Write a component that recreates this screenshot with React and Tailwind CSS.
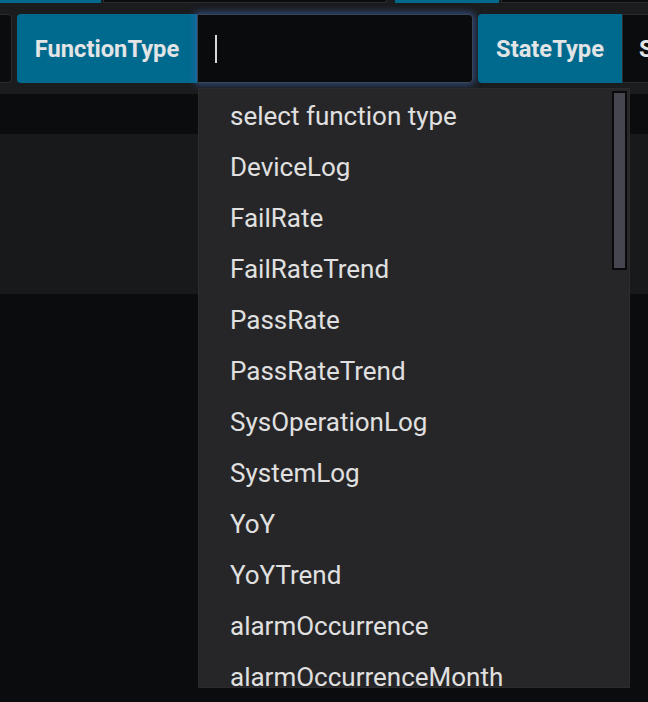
const OPTIONS = [
  'select function type',
  'DeviceLog',
  'FailRate',
  'FailRateTrend',
  'PassRate',
  'PassRateTrend',
  'SysOperationLog',
  'SystemLog',
  'YoY',
  'YoYTrend',
  'alarmOccurrence',
  'alarmOccurrenceMonth',
]

function Label({ children, className = '' }) {
  return (
    <div
      className={`shrink-0 flex items-center justify-center pt-[3px] bg-[#006a8e] text-[#e2e4e6] text-[23.7px] font-bold ${className}`}
    >
      {children}
    </div>
  )
}

export default function App() {
  return (
    <div className="relative w-full h-[702px] overflow-hidden bg-[#0b0c0e] font-['Roboto',sans-serif]">
      {/* toolbar */}
      <div className="bg-[#1b1c1e] h-[94px]">
        {/* previous row, mostly scrolled out */}
        <div className="flex h-[3px]">
          <div className="shrink-0 w-[101px] bg-[#006a8e]" />
          <div className="shrink-0 ml-[2px] w-[284px] bg-[#0b0c0e] border-x border-b border-[#2b2c2f] rounded-br-[4px]" />
          <div className="shrink-0 ml-[8px] w-[104px] bg-[#006a8e]" />
          <div className="ml-[2px] flex-1 min-w-0 bg-[#0b0c0e] border-l border-b border-[#2b2c2f]" />
        </div>

        <div className="flex mt-[11px] h-[69px]">
          <div className="shrink-0 w-[12px] bg-[#0b0c0e] border border-l-0 border-[#2b2c2f] rounded-r-[4px]" />
          <Label className="ml-[5px] w-[180px] rounded-l-[4px]">FunctionType</Label>
          <div className="shrink-0 w-[276px] bg-[#0a0b0d] border border-[#3b4558] rounded-r-[4px] shadow-[0_0_7px_2px_rgba(60,105,180,0.6)] flex items-center pl-[17px]">
            <div className="w-[2px] h-[28px] bg-[#d8d8d8]" />
          </div>
          <Label className="ml-[5px] w-[144px] rounded-l-[4px]">StateType</Label>
          <div className="flex-1 min-w-0 overflow-hidden bg-[#0b0c0e] border border-r-0 border-[#2b2c2f] flex items-center pt-[3px] pl-[16px] text-[23.7px] font-bold text-[#e2e4e6]">
            S
          </div>
        </div>
      </div>

      <div className="h-[40px] bg-[#0b0c0e]" />
      <div className="h-[160px] bg-[#18191b]" />

      {/* open dropdown */}
      <div className="absolute left-[198px] top-[88px] w-[432px] h-[600px] bg-[#262628] border border-[#2c2c2f] overflow-hidden">
        <ul className="pt-[2px]">
          {OPTIONS.map(o => (
            <li key={o} className="h-[51px] flex items-center pl-[31px] text-[26px] text-[#e0e0e0] whitespace-nowrap">
              {o}
            </li>
          ))}
        </ul>
        <div className="absolute right-[2px] top-[2px] w-[15px] h-[179px] bg-[#45464f] border-2 border-[#0a0a0c]" />
      </div>
    </div>
  )
}
